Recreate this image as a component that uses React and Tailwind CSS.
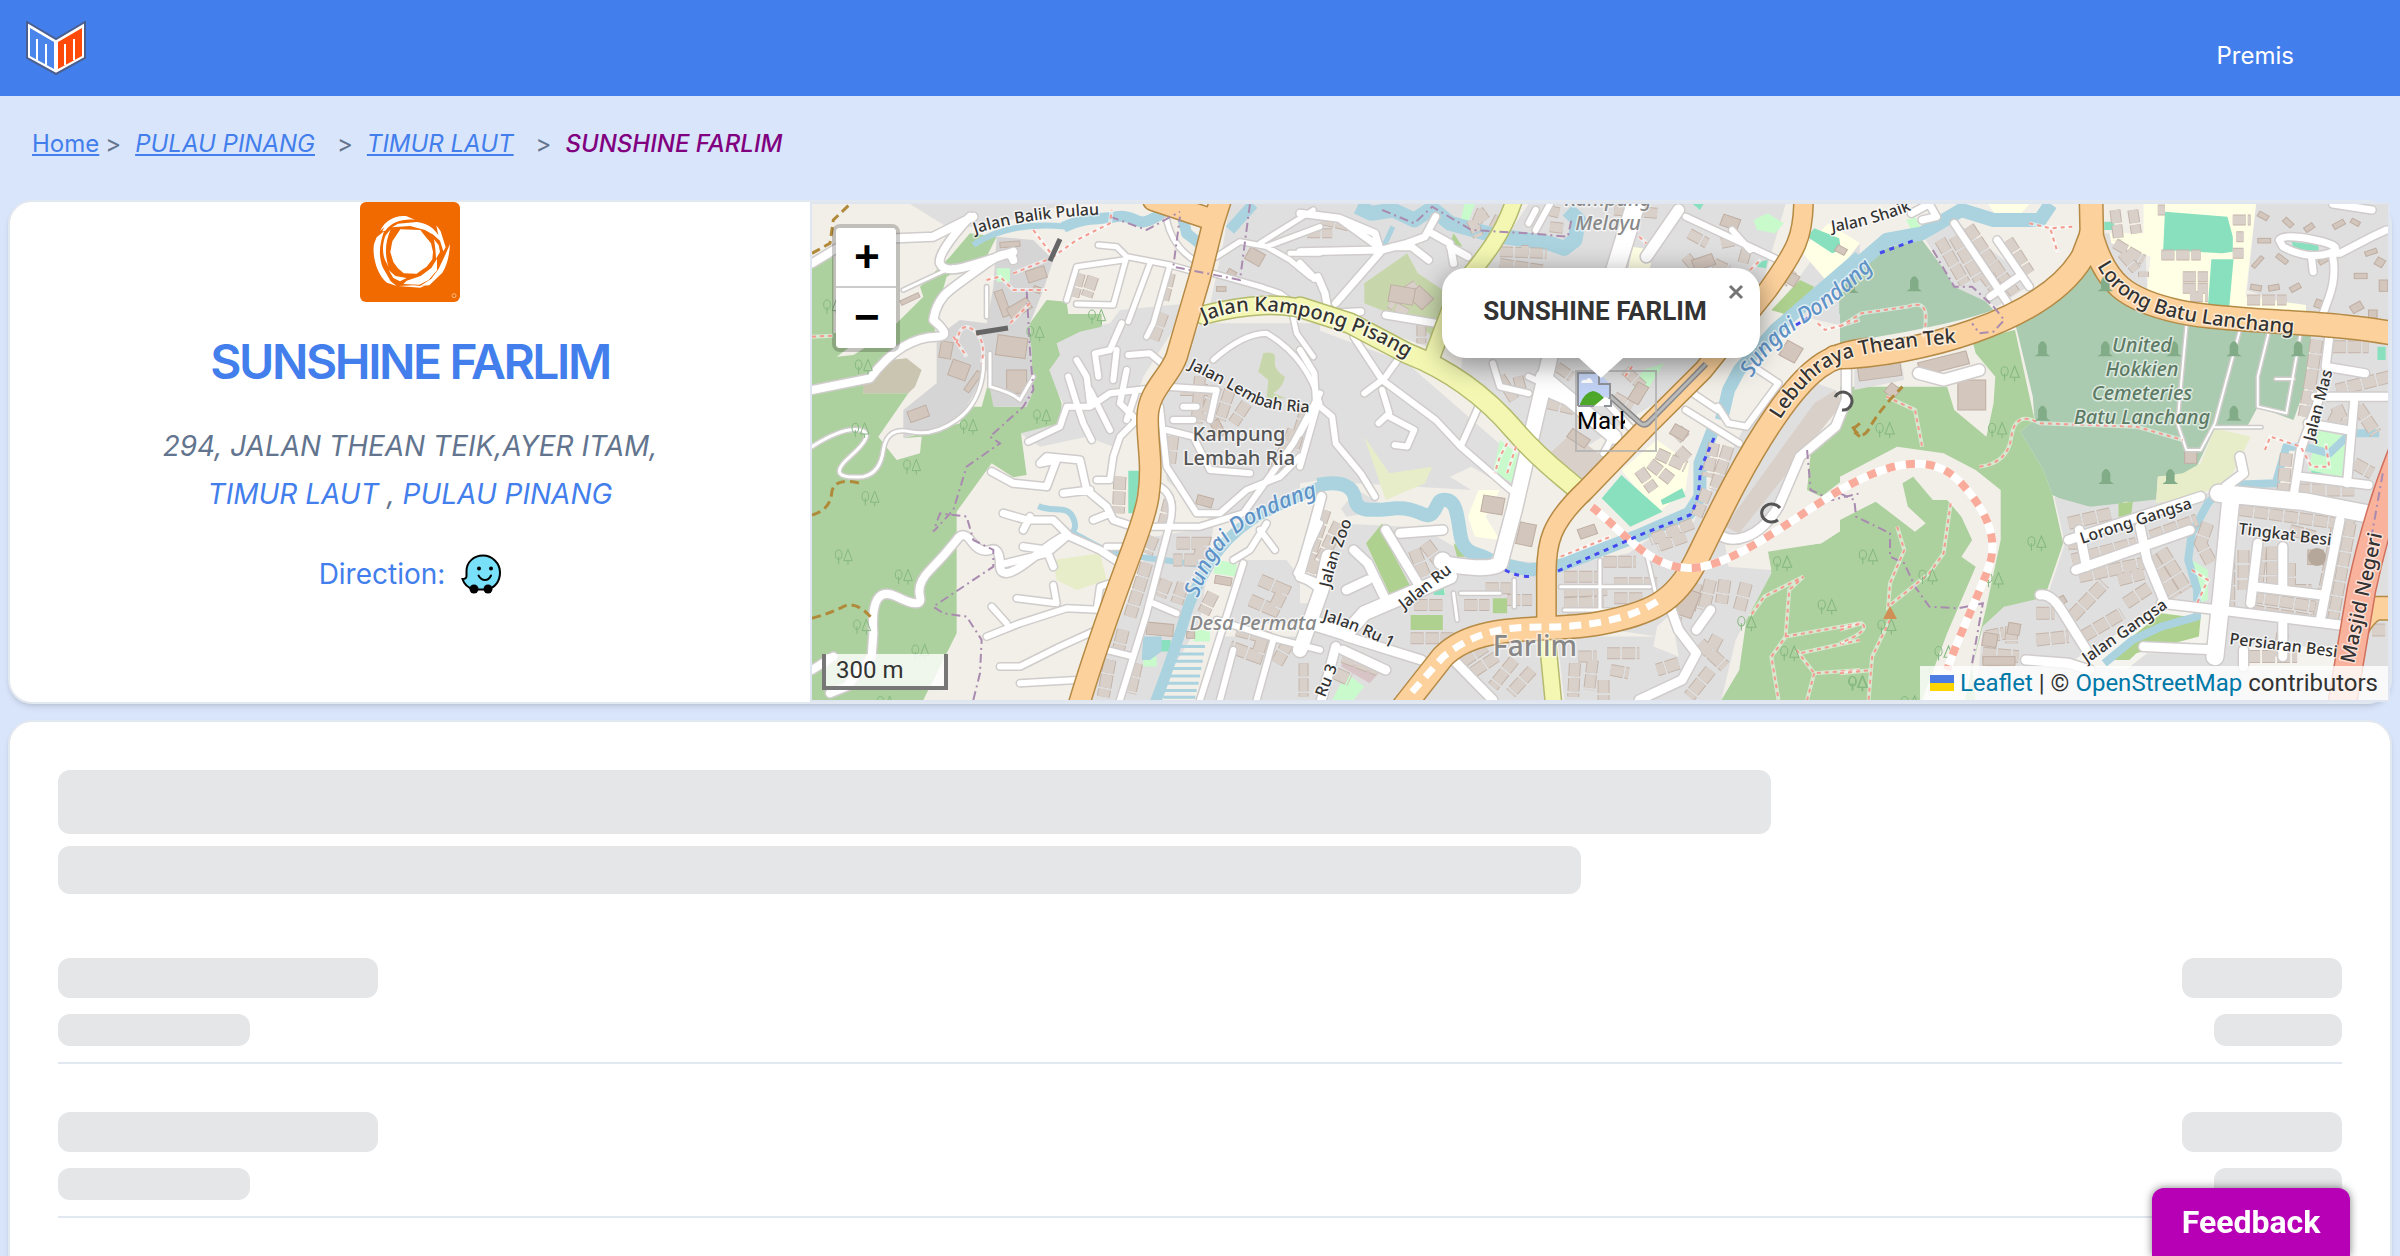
import { useId } from 'react';

// Map tiles. Shapes are kept in each tile's own units, the transform puts them on the map.
const tiles = [
    {
        id: 'west',
        transform: 'translate(800 190) scale(0.3333)',
        areas: [
            ['#e0dfdf', 'M330 42H800L560 110H440ZM1290 42H1560V345H1230L1270 160ZM1200 400H1560V900L1240 1000 1100 870 1080 640ZM770 460L830 420 930 400 960 360 1170 340 1030 560 960 760 940 770 860 740 720 770 660 730 780 700 790 640 745 560ZM1060 1040L1240 1010 1200 1300 1060 1530H860ZM1250 1340H1560V1530H1200ZM1340 1110H1460L1560 1240V1300H1270Z'],
            ['#add19e', 'M36 500L200 560 190 610H325L235 740 290 810 360 790 365 740 310 745 480 700 510 650H545L570 560 585 650H680L700 600 690 400 740 330 800 335 805 372H905V410L840 425 770 460 780 495 748 540 785 640 780 700 663 730 680 855 640 862 575 820 470 965V1330L370 1530H36ZM510 130L590 140 560 200 440 260 400 400 410 440 300 480 210 560 36 600V440L290 400 370 320 360 290 450 200ZM36 210L100 190V480L36 600Z'],
            ['#f2efe9', 'M110 500L150 470 200 470 160 495Z'],
            ['#c9c5b0', 'M190 575L270 510 320 505 365 540 345 590 325 610H190Z'],
            ['#d6d5d5', 'M590 140L700 150 760 210 730 300 690 400 700 600 680 650H580L560 540 500 650 480 690 310 745V660L410 580V440L480 390 560 400 580 290Z'],
            ['#c8d7ab', 'M1390 490Q1430 480 1425 510T1455 560Q1450 590 1420 610L1460 625H1400L1405 570 1375 545Z'],
            ['#e7edc9', 'M760 1110L900 1090 920 1170 830 1200 770 1170Z'],
            ['#c8facc', 'M590 235H630V275H590ZM1250 1110L1310 1120 1310 1160 1240 1150ZM1180 1320H1230V1355H1180ZM1030 1400H1070V1430H1030Z'],
            ['#88e0be', 'M985 842H1022L1002 970H985ZM1080 1350H1112V1385H1080Z'],
            ['#aad3df', 'M1030 1340H1085V1385L1050 1410H1025Z'],
        ],
        rivers: [
            [11, 'M790 112C850 80 900 90 950 80S1010 110 1050 90 1100 60 1140 65M1145 70L1160 130 1205 165M1360 42L1290 120'],
            [6, 'M520 165C600 110 700 100 800 110M715 948C760 970 800 940 820 985S800 1020 830 1035 890 1070 940 1090L1200 1125'],
            [11, 'M1560 890C1400 960 1300 1000 1230 1120S1160 1270 1140 1330 1100 1450 1065 1540'],
            [3, 'M1130 1370H1215M1125 1392H1212M1115 1414H1208M1110 1436H1204M1105 1458H1200M1100 1480H1196M1095 1502H1190M1090 1522H1186'],
        ],
        terraces: [
            [11, 'M840 250L820 320M880 260L860 320M1110 250L1090 330M1090 370L1060 450M1140 600H1230M1200 560L1190 700M1250 590L1210 690M1290 600L1260 690M1340 640L1300 700M1120 740L1110 820M1480 720L1420 850M1520 650L1480 780'],
            [12, 'M960 860L955 970M1110 930L1090 1010M1060 1040L1040 1090M1040 1120L990 1280M970 1320L955 1380M930 1410L910 1520M1010 1420L990 1510M1130 1060H1210L1195 1110H1120M1100 1170L1080 1220M1150 1180L1130 1240M1240 1210L1210 1270M1380 1170L1450 1200 1420 1260 1350 1230M1310 1320L1390 1340 1370 1400 1290 1370M1470 1350L1430 1420M1540 1110L1520 1160'],
        ],
        buildings: [
            [600, 155, 60, 16, -4], [680, 235, 58, 36, -18], [595, 300, 26, 80, -20], [640, 320, 36, 70, 60], [590, 440, 90, 60, 8], [620, 540, 60, 70, 0], [450, 515, 55, 50, 20], [325, 655, 60, 34, -20], [420, 455, 36, 50, 10], [300, 320, 60, 14, -25], [510, 540, 18, 70, 35], [1340, 180, 50, 40, 30], [1250, 290, 28, 14, 0], [1245, 1160, 50, 24, 10], [1190, 920, 48, 28, 15], [1240, 690, 28, 50, -30], [1280, 240, 26, 26, 30], [700, 290, 22, 18, 20], [1040, 1300, 80, 36, 5], [1160, 1325, 24, 20, 0],
        ],
        streets: [
            [8, 'M290 145L400 140 520 80M510 80Q410 190 420 220T500 230 640 185M36 220L110 175M36 600L210 565Q260 500 310 470T410 440 400 390Q410 330 450 300T560 220 640 210'],
            [8, 'M470 1050Q430 1100 390 1140T360 1220 290 1220 220 1330L215 1400 140 1490 90 1510M36 1440L100 1400M470 1050Q490 1020 515 1055T570 1080 600 1125 690 1110 790 1040'],
            [5, 'M895 165L950 170 980 200 1110 225 1200 250M1110 225L1060 400 1040 440M1050 220L985 395M980 200L940 345 830 342M800 330L830 230 970 210M1100 90Q1120 180 1200 220M1250 200L1320 155 1400 170 1560 110M1380 160L1540 60M1470 190H1560M1400 170L1470 210 1530 260M1240 250L1380 290 1440 310 1480 340M1560 640Q1520 500 1400 430 1330 430 1240 510M1470 340L1490 430 1540 500'],
            [6, 'M685 755L780 710 800 650 870 650 930 610 1060 595M830 510L860 560 870 640M805 560L830 640 850 700 875 750M870 600L930 720M965 400L930 480 885 490 895 560M950 480L940 570M985 495L1050 490 1110 540M980 540L960 640 1010 690 960 740 940 800 930 870 890 870M1010 600L980 690'],
            [7, 'M575 845L640 880 740 890 770 810 720 820 740 800 840 810 860 900 920 950 940 990 1000 1010M870 900L790 910M930 970L880 990M610 970L680 990 760 990 810 1040 900 1080 960 1120M670 1020L690 980M760 1130L740 1080 670 1070M600 1125L740 1090 800 1040'],
            [6, 'M560 1340L660 1300 800 1255 910 1260M575 1250L620 1300M650 1225L770 1240 760 1185M890 1260L900 1190 930 1180M600 1430H660L780 1370 890 1320M660 1480L830 1470M920 1070H980'],
            [6, 'M1080 650L1100 830 1190 970 1260 970 1340 900 1440 860 1500 800M1100 590L1250 600 1230 690M1100 720L1180 740 1230 840 1350 850M1080 890Q1130 920 1110 1000L1040 1270 960 1530M1040 1010L1200 1010 1330 970 1480 760 1560 610M1380 1020L1425 1080M1300 1110L1350 1080 1400 1000M1330 1120L1200 1530M1060 1240L1130 1270M1250 1290L1440 1350 1560 1380M1560 1200L1490 1150 1560 1000M1300 1380L1260 1530M1420 1350L1370 1530M1150 650H1190M1120 690H1180M880 1370L1000 1400'],
            [3, 'M36 770Q130 710 180 720T150 800 190 860Q240 850 250 780T330 725 470 690 550 540V500M310 300L460 230M570 490V590Q640 610 660 630L700 560M560 290L560 380'],
        ],
        secondary: [[17, 'M1210 375C1330 345 1450 330 1560 372']],
        primary: [[20, 'M1060 30L1240 90M1262 30L1240 100 1200 260 1130 500C1110 560 1045 600 1043 680S1060 820 1045 920 940 1200 838 1540']],
        trunk: [],
        redPaths: 'M700 120L760 200 830 150 930 100 935 60M560 270L600 260 640 300 740 300M640 250L740 210M470 460Q480 390 520 420T545 520M460 440L500 500M690 340L630 400M36 440L100 437',
        brownPaths: 'M36 190L90 160 100 90 150 42M36 975Q90 960 95 910T180 880M36 1285Q90 1270 130 1250T220 1290',
        borders: 'M680 300L690 480 700 600 670 650 570 740 600 760 500 830 460 960 400 1025 420 970 500 980 520 1050 580 1080V1130L400 1250 430 1270 500 1280 545 1350 540 1450 520 1530M1350 42L1320 270 1120 230 1140 80M930 80L1040 120 1140 65',
        trees: [[95, 350], [190, 530], [180, 720], [505, 710], [725, 680], [335, 830], [210, 925], [130, 1100], [310, 1160], [185, 1310], [360, 1385], [890, 380], [705, 430], [255, 1540]],
        graves: [],
    },
    {
        id: 'middle',
        transform: 'translate(1300 190) scale(0.3571 0.3333)',
        areas: [
            ['#e0dfdf', 'M0 42H620L440 330 380 480 0 330ZM640 42H1360L1290 300 1140 540 700 840 450 540 480 300ZM0 400L300 520 600 800 590 900 480 830 420 860 480 900 0 870ZM0 1100L160 900 480 1100 690 1120V1290L400 1370 300 1530H0ZM700 1140L1100 1000 1250 700 1420 570 1500 600 1300 1000 1320 1150 1220 1350 1180 1530H740L720 1340H1000L690 1290ZM400 1390L690 1340 700 1530H320ZM1440 200L1568 160V420L1330 360Z'],
            ['#f2efe9', 'M0 880L60 870 130 980 240 960 380 960 440 1040 300 1010 100 1000 40 1240H0ZM640 860L760 920 690 1040 600 1100 540 1090 560 900ZM720 1040L900 960 1000 1030 920 1090 730 1130Z'],
            ['#c8d7ab', 'M180 280L300 190 330 250 400 300V350L370 440 330 400 250 370 180 340Z'],
            ['#e7edc9', 'M180 740L250 850 370 830 350 880 240 930Z'],
            ['#aed18f', 'M185 1060L230 1000 260 1090 310 1190 250 1210ZM310 1275H400V1320H310ZM540 1225H580V1270H540ZM430 1060L490 1100 440 1100ZM430 130L455 170 420 160ZM1400 270L1440 290 1380 380 1320 360Z'],
            ['#ffffe5', 'M500 900L560 900 520 980 560 1050 490 1040 470 980ZM1400 180L1480 100 1568 160 1480 280ZM900 840L1000 750 1090 820 1080 900 1000 970ZM930 170L990 180 980 235H920Z'],
            ['#c8facc', 'M560 750L620 800 600 880 540 850ZM960 540L1020 520 960 620 930 600ZM1270 90L1310 70 1355 100 1330 130 1280 120ZM460 42H490L470 100 450 90ZM130 1450L180 1490 150 1530H90ZM380 1190H405V1215H380ZM1560 1100H1568V1120Z'],
            ['#88e0be', 'M900 855L1015 965 925 1010 845 925ZM1010 930L1070 895 1080 920 1015 945ZM1420 140L1440 115 1510 145 1515 180 1490 190ZM1285 215L1310 210 1305 235 1280 230ZM370 1195L400 1180 405 1215H375ZM1100 42H1130L1120 60Z'],
            ['#c98f9a55', 'M120 1410L220 1450 195 1480 115 1430Z'],
            ['#add19e', 'M1568 640L1500 720 1430 790 1420 900 1460 920 1568 830ZM1568 985L1460 1060 1310 1080 1320 1150 1250 1290 1230 1440 1180 1530H1568Z'],
            ['#f2efe9', 'M1190 1060L1400 960 1568 850V985L1460 1060 1310 1085 1320 1140 1200 1130ZM1000 1310L1040 1270 1060 1400 990 1370Z'],
            ['#d9d0c9', 'M760 730L850 800 790 870 700 790ZM1440 640L1500 600 1520 640 1430 760 1230 1030 1190 1010Z'],
            ['#aacbaf', 'M1510 300L1568 280V410L1530 400 1510 370Z'],
        ],
        rivers: [
            [15, 'M160 50L200 70 260 60 320 90 370 55 420 100 540 135 700 160 740 175 770 150 780 90 750 60'],
            [5, 'M260 110L230 180 150 270'],
            [14, 'M50 885C120 870 150 890 155 930S210 960 270 955 350 990 370 970 380 925 410 930 440 980 450 1040 510 1090 530 1110'],
            [13, 'M560 1120L640 1140 720 1130 940 1040 1090 970 1120 920 1120 820 1160 710M1180 690L1200 600 1230 540 1330 420 1568 200'],
        ],
        terraces: [
            [10, 'M480 90L500 140M510 60L490 110M560 185L690 190M560 80L540 120M690 60L730 70M700 110L740 115M880 60L1000 70M560 220L680 240M560 560L600 630M610 560L620 600M720 530L760 560M700 600L780 640M690 640L770 660M910 540L960 590M880 620L930 650M1090 130L1140 160M1080 200L1120 250M1180 160L1230 150M1160 220L1200 240M1250 180L1240 220M1380 240L1350 280'],
            [11, 'M1000 790L1080 830M980 820L1040 870M950 840L990 900M1080 720L1050 750M1060 780L1090 810M1160 760L1140 860M1200 770L1160 900M1140 900L1110 980M1100 1000L980 1050M1080 1040L1000 1070'],
            [11, 'M520 1195H590M740 1160H840M850 1115H940M740 1205L860 1200M880 1180H1000M460 1245H530M580 1230H650M740 1240L850 1235M880 1225H960M310 1345H430M320 1245H400M750 1280H840M520 1370L450 1420M600 1410L540 1490M650 1440L590 1510M550 1400L480 1450M770 1420L765 1520M820 1410L810 1500M860 1390H950M870 1440L920 1450M850 1470V1530M780 1400H830'],
            [12, 'M1070 1190L1050 1290M1110 1180L1090 1260M1150 1170L1130 1260M1190 1170L1180 1240M1250 1180L1230 1260M1120 1360L1190 1430M1170 1340L1140 1400M1150 1440L1090 1520M1060 1420L1000 1440M70 960L20 1120M110 1000L60 1110M350 1060L400 1130M320 1080L350 1160M120 1400L220 1440M100 1450L140 1470M40 1110L20 1180'],
            [9, 'M60 90L140 110M20 130H90M260 330L330 280M300 370L250 340M340 400V460M500 60L520 90M10 1420V1520M620 180H640'],
        ],
        buildings: [
            [310, 300, 56, 46, 45], [510, 920, 60, 50, 10], [610, 1000, 46, 66, 12], [1040, 710, 44, 34, 30], [1340, 640, 30, 60, 35], [1350, 460, 50, 50, 30], [750, 730, 60, 30, 35], [250, 290, 70, 50, 10], [1360, 250, 34, 34, 30], [1100, 200, 60, 34, -20], [1180, 80, 50, 34, 20], [780, 1010, 50, 30, -20], [1060, 1200, 50, 80, 20], [1500, 170, 30, 20, 30], [930, 580, 34, 60, 30],
        ],
        streets: [
            [7, 'M0 70L110 85 210 130 225 180 0 185M110 85L220 170M100 340L230 180 300 160 360 210M300 160L350 140 380 80M370 130L420 160 430 220M420 170L470 200M0 220L40 265M50 260L70 310 80 370 170 365M240 375L380 400M260 170L310 170'],
            [6, 'M0 480L40 550 45 640 0 730M45 640L90 680 100 760 170 850 210 920M50 640L0 830M150 440L230 570 380 690 450 770 590 900M230 570L180 610M230 600L250 670 220 700M250 680L320 720 300 770 265 765M500 650L450 770M280 500L240 560'],
            [15, 'M700 500L650 730 600 960 560 1120Q540 1140 460 1130T400 1110'],
            [14, 'M400 1110L420 1160 180 1270 130 1330 40 1300M80 1100L60 1200 0 1380M680 560L880 740'],
            [6, 'M540 520L560 590 640 610M640 560L700 590M690 610L800 660M880 730L850 790M800 600L860 640 940 730M1080 660L1230 760M1100 610L1170 660M1170 650L1200 700 1250 710 1340 580 1270 530M1080 80L1340 210M1210 120L1260 180M660 60L640 100M700 42L660 120'],
            [9, 'M60 920L40 1000 0 1150M150 1080L190 1120 240 1230M240 1020L330 1180M280 1030L400 1020M0 1160L70 1190M130 1200L190 1170M130 1340L340 1410M100 1370L60 1530M120 1380L240 1440M430 1410L540 1530'],
            [18, 'M940 42L880 250'],
            [11, 'M1060 60L970 200'],
            [9, 'M1040 1260L1060 1320 1110 1390 1070 1470 950 1530M1110 1320L1150 1260M1170 1030Q1200 1060 1250 1040T1340 950L1400 800 1500 710 1530 630 1530 540'],
            [3, 'M840 1110V1270M970 1090L1000 1230M600 1170V1250M430 1210L440 1290M450 1210H560M730 1190H980M740 1260H900'],
        ],
        secondary: [
            [15, 'M600 30C570 130 520 200 440 300L370 500'],
            [19, 'M0 352L140 400 300 490C420 540 520 620 600 720S740 860 790 910'],
            [15, 'M690 1320L710 1540'],
        ],
        primary: [
            [18, 'M1410 30C1410 140 1390 180 1310 300L1130 540 980 700 800 900C700 1000 690 1060 690 1150V1300'],
            [22, 'M1590 480C1480 490 1420 540 1330 680S1170 980 1110 1110 980 1270 840 1300 500 1290 400 1400L290 1550'],
        ],
        trunk: [],
        redPaths: 'M580 760L560 800 545 850M605 770L580 850M730 1100L870 1040M950 140L970 160M1260 240L1290 210M1568 1300L1360 1340 1320 1400 1340 1530M1360 1340L1370 1200 1410 1160 1300 1220 1260 1280M1390 1380L1440 1450 1568 1440M1440 1450L1420 1530M1568 1350L1400 1390M1450 400L1470 420 1568 390M930 530L910 560',
        brownPaths: 'M1568 700L1545 720 1568 740',
        borders: 'M230 60L320 100 370 50 480 120 640 130 750 140 760 90M1420 780L1430 900 1490 930 1568 910',
        trees: [[1350, 1120], [1475, 1250], [1370, 1390], [1250, 1300], [1560, 1480]],
        graves: [],
    },
    {
        id: 'east',
        transform: 'translate(1840 190) scale(0.3571 0.3333)',
        areas: [
            ['#add19e', 'M370 450L490 420 545 690 505 725 570 840 595 915 625 1060 580 1200 520 1270 460 1250 400 1310 370 1430 380 1530H0V590L180 590H300L320 660 410 740 430 640 435 560 380 490Z'],
            ['#aacbaf', 'M705 190C740 290 860 370 960 400L1320 430 1300 600 1270 690 1170 650 1140 710 1050 715 990 850 890 860 885 940 800 935 740 955 650 945 595 915 570 840 505 725 545 690 540 620 500 440 490 400Q640 320 705 190ZM0 300L100 180 230 150 320 280 380 300 430 360C300 410 100 440 0 460Z'],
            ['#f2efe9', 'M0 860L160 770 290 790 380 840 450 900V1050L410 1250 370 1430 350 1530H230L300 1330 380 1130 340 1100 370 1050 340 980 300 930 260 930 205 860 175 880 190 950 240 1000 210 1025 100 935 0 990Z'],
            ['#e0dfdf', 'M720 42H850L860 300 760 230ZM1165 42H1568V400L1350 380 1140 300ZM600 920L700 950 1000 915 1080 900 1290 880 1320 430 1568 450V1530H380L400 1310 460 1250 580 1220 630 1060ZM240 150L320 90 540 280 440 350 320 290ZM40 540L170 500 180 570 40 600Z'],
            ['#e7edc9', 'M1050 715L1150 740 1100 850 1060 890 1000 915 885 940 890 860 960 850 1010 820Z'],
            ['#ffffe5', 'M740 42H1165L1135 320 1305 345V375L960 345 860 300 870 200 760 160ZM415 42H530L500 80H440ZM0 130L20 200 0 250Z'],
            ['#f2efe9', 'M720 42H850V130H740Z'],
            ['#f5f3ee', 'M900 1250L1080 1270V1390L860 1390 800 1440 640 1420ZM1140 1370H1400V1440H1140Z'],
            ['#88e0be', 'M910 65L1085 80 1100 140V185L1070 190 905 180ZM1040 208H1102L1090 352H1030ZM740 95H768V120H740ZM1265 155L1340 165V185L1270 175ZM1505 470H1528V510H1505ZM1320 825H1365V850H1320Z'],
            ['#c8facc', 'M185 90L210 80 230 120 200 120ZM1340 720L1420 740 1405 860 1310 840ZM985 1110L1030 1140V1230L1000 1240Z'],
            ['#aed18f', 'M780 940L820 935 815 980H780ZM1010 1285L1005 1340 830 1390 810 1410H740L830 1330 900 1270Z'],
        ],
        rivers: [
            [14, 'M0 270L130 150 230 130 340 60 430 90 560 90 590 42'],
            [8, 'M1510 730H1430L1370 790 1300 770H1250L1220 880 1080 885 1030 940 985 1030 975 1110 1000 1200 1000 1280 900 1310 820 1350 740 1420'],
        ],
        terraces: [
            [11, 'M280 150L350 280M320 140L390 270M360 110L440 240M430 220L490 310M400 250L450 320M470 150L530 250'],
            [10, 'M770 60L780 150M820 60L830 130M770 160L850 210M890 60H910M790 190L830 240M850 245V260M1100 90H1150M1110 140H1130M960 260H1030M960 295H1030M980 320H1030M1140 330H1250M1100 190H1130M900 195H1010'],
            [12, 'M1335 450L1320 560M1320 560L1300 680M1380 470H1480M1540 560L1390 600M1390 650L1420 720M1450 650L1500 730M1250 790L1240 910M1280 900H1440M1440 820L1490 850M1380 700L1400 660'],
            [12, 'M640 1000L760 970M650 1110L830 1060M870 1040L1000 990M670 1160L850 1120M870 1100L940 1220M900 1080L970 1200M780 1170L850 1150M1030 1000L1010 1060 1040 1120M640 1060H690M680 1340L790 1270M800 1240L870 1190M650 1280L740 1180'],
            [11, 'M1120 960L1390 1000M1090 1100V1250M1130 1080V1200M1180 1070L1170 1180M1210 1070V1180M1260 1120V1200H1320M1150 1220L1330 1250M1150 1260L1320 1290M1390 1020L1340 1280M1430 1000L1380 1290M1260 1020L1330 1040M1420 1000L1450 960'],
            [12, 'M410 1340L460 1330M480 1310V1360M400 1390L500 1400M430 1410V1430M550 1270H600M550 1350L640 1340M1240 1330L1230 1400M1140 1400H1280M1490 1320H1530'],
        ],
        buildings: [
            [330, 570, 78, 90, 0], [220, 500, 140, 40, -15], [50, 510, 120, 55, -8], [965, 780, 34, 40, 0], [1170, 70, 30, 16, 30], [1240, 90, 30, 16, 45], [1300, 105, 28, 16, -35], [1170, 145, 36, 14, 0], [1150, 210, 40, 12, -50], [1220, 200, 36, 14, 40], [1380, 95, 34, 16, -30], [1430, 90, 26, 14, 30], [1470, 180, 34, 14, -20], [1440, 250, 36, 16, 0], [1500, 205, 24, 24, 30], [1340, 205, 30, 14, -30], [1260, 285, 30, 16, -30], [1200, 285, 30, 16, -10], [1430, 340, 34, 24, -30], [1510, 270, 24, 34, 0], [1330, 330, 24, 24, 20], [1480, 360, 24, 24, 0], [1310, 1080, 44, 44, 0], [400, 1330, 40, 40, 10], [470, 1300, 34, 34, 10], [1150, 285, 30, 16, 10], [400, 1400, 90, 26, 0], [130, 585, 34, 34, 40], [610, 1220, 22, 22, -30],
        ],
        streets: [
            [7, 'M320 100L470 340M440 150L530 290M500 260L420 320M200 70L250 42 270 80 230 90'],
            [7, 'M1230 150Q1240 130 1330 150T1370 190Q1310 210 1240 170ZM1370 190L1400 190 1490 140 1530 120M1320 200L1325 245M1380 200Q1390 260 1370 320L1350 380M1380 42L1490 60'],
            [8, 'M1370 440L1360 530 1470 550M1330 620H1530M1440 630L1420 880M1310 700L1420 720M1350 600L1290 780 1270 920M1290 860L1480 885'],
            [17, 'M1060 910L1300 935 1470 970M1095 920L1070 1200 1050 1400'],
            [9, 'M1080 890L1130 850 1120 800M640 1050L1010 920M660 1140L980 1020M840 1010L860 1110 910 1240M670 1020L690 1130M900 1240L1100 1265 1400 1305M1060 1380L850 1370M560 1215Q590 1210 620 1260L690 1380M520 1410L640 1420 700 1440M1170 1060L1150 1240M1400 990L1345 1290M1240 1070V1190M1160 1190L1350 1215M1240 1290V1400M1130 1380V1430'],
            [11, 'M220 550L290 570 390 540'],
            [2, 'M970 410L945 700 970 780H1010L1050 700 1120 420M1200 430L1170 560V650L1250 670 1290 430M1220 567H1270M1050 712L1180 712'],
        ],
        secondary: [],
        primary: [[22, 'M-15 502C100 500 250 470 370 425S620 310 680 200L705 130 703 30M703 130C740 280 800 330 950 365S1400 390 1590 440M1568 1255H1500Q1440 1290 1430 1400']],
        trunk: [[27, 'M1590 750C1530 900 1490 1050 1460 1200L1405 1550']],
        redPaths: 'M0 410L60 370 190 350Q240 330 240 380T230 440M530 100L590 115 650 110M590 120L610 190M130 620L210 660 230 770M390 830Q470 820 480 740T560 700L830 710 960 750M160 1010L180 1080 140 1180 135 1250 250 1150 290 1090 310 940M140 1290L90 1400 80 1530M0 1320L60 1300Q90 1320 0 1360M0 1450L90 1440M1190 780L1205 740 1290 770 1320 830 1370 830 1360 760M985 1140L1030 1170 1000 1240',
        brownPaths: 'M35 710Q60 760 85 710T175 590',
        borders: 'M0 910L40 930 45 980 140 1030V1100L180 1120 210 1190 250 1250 330 1255 400 1240 370 1420M430 350L460 390 430 425 390 430 370 400M260 180L320 290H370L430 350M1520 850L1490 1030',
        trees: [[475, 550], [125, 720], [440, 720], [550, 1060], [78, 1100], [245, 1160], [130, 1310], [50, 1480], [290, 1390], [430, 1170], [195, 1540]],
        graves: [[208, 280], [567, 475], [743, 280], [743, 475], [1103, 475], [1283, 475], [567, 668], [1103, 668], [745, 858], [925, 858], [30, 285], [935, 475]],
    },
];

const streetLabels = [
    { text: 'Jalan Balik Pulau', d: 'M975 234Q1030 216 1120 214', size: 16 },
    { text: 'Jalan Kampong Pisang', d: 'M1204 322Q1250 301 1318 320T1430 374', size: 20 },
    { text: 'Jalan Lembah Ria', d: 'M1188 368Q1225 386 1248 400T1330 412', size: 16 },
    { text: 'Sungai Dondang', d: 'M1198 598Q1215 545 1250 525T1360 482', size: 22, fill: '#5f93c8', italic: true },
    { text: 'Sungai Dondang', d: 'M1752 378Q1770 345 1810 320T1900 240', size: 22, fill: '#5f93c8', italic: true },
    { text: 'Jalan Zoo', d: 'M1330 588Q1340 545 1362 500', size: 16 },
    { text: 'Jalan Ru', d: 'M1404 610L1474 555', size: 16 },
    { text: 'Jalan Ru 1', d: 'M1322 620Q1365 632 1420 664', size: 16 },
    { text: 'Ru 3', d: 'M1325 698L1344 650', size: 16 },
    { text: 'Lebuhraya Thean Tek', d: 'M1780 420Q1808 375 1838 362T1970 342', size: 20 },
    { text: 'Jalan Shaik', d: 'M1832 232Q1880 225 1930 202', size: 16 },
    { text: 'Lorong Batu Lanchang', d: 'M2097 266Q2115 300 2160 314T2330 336', size: 20 },
    { text: 'Jalan Mas', d: 'M2314 442L2338 350', size: 16 },
    { text: 'Lorong Gangsa', d: 'M2082 544L2220 499', size: 16 },
    { text: 'Jalan Gangsa', d: 'M2087 664L2190 592', size: 16 },
    { text: 'Tingkat Besi', d: 'M2238 534L2350 548', size: 16 },
    { text: 'Persiaran Besi', d: 'M2229 644L2360 660', size: 16 },
    { text: 'Masjid Negeri', d: 'M2354 664L2386 516', size: 20 },
];

const placeLabels = [
    { lines: ['Kampung', 'Lembah Ria'], x: 1239, y: 441, size: 20, fill: '#555' },
    { lines: ['Kampung', 'Melayu'], x: 1608, y: 206, size: 20, fill: '#888', italic: true },
    { lines: ['Desa Permata'], x: 1253, y: 630, size: 20, fill: '#888', italic: true },
    { lines: ['Farlim'], x: 1535, y: 656, size: 28, fill: '#888' },
    { lines: ['United', 'Hokkien', 'Cemeteries', 'Batu Lanchang'], x: 2142, y: 352, size: 20, fill: '#5d7a66', italic: true },
];

function Lines({ items, color, extra = 0, ...rest }) {
    return items.map(([width, d]) => (
        <path key={d} d={d} stroke={color} strokeWidth={width + extra} vectorEffect="non-scaling-stroke" {...rest} />
    ));
}

function Roads({ kind, color, casing }) {
    return (
        <g fill="none" strokeLinejoin="round" strokeLinecap="round">
            {tiles.map((t) => (
                <g key={t.id} transform={t.transform}><Lines items={t[kind]} color={casing} extra={3} /></g>
            ))}
            {tiles.map((t) => (
                <g key={t.id} transform={t.transform}><Lines items={t[kind]} color={color} /></g>
            ))}
        </g>
    );
}

function StreetLabel({ text, d, size, fill = '#333', italic }) {
    const id = useId();
    return (
        <>
            <path id={id} d={d} fill="none" stroke="none" />
            <text fontSize={size} fill={fill} fontStyle={italic ? 'italic' : 'normal'}>
                <textPath href={`#${id}`}>{text}</textPath>
            </text>
        </>
    );
}

function MapCanvas() {
    return (
        <svg className="absolute inset-0 h-full w-full" viewBox="812 204 1576 496" preserveAspectRatio="xMidYMid slice" aria-hidden="true">
            <rect x="700" y="100" width="1800" height="700" fill="#f2efe9" />
            {tiles.map((t) => (
                <g key={t.id} transform={t.transform}>
                    {t.areas.map(([fill, d]) => <path key={d} d={d} fill={fill} />)}
                </g>
            ))}
            {tiles.map((t) => (
                <g key={t.id} transform={t.transform} fill="none">
                    <Lines items={t.rivers} color="#aad3df" strokeLinejoin="round" />
                    <Lines items={t.terraces} color="#c3b5ab" strokeDasharray="13 2" extra={1} />
                    <Lines items={t.terraces} color="#d9d0c9" strokeDasharray="13 2" extra={-1} />
                    {t.buildings.map(([x, y, w, h, r]) => (
                        <rect key={`${x}-${y}`} x={x} y={y} width={w} height={h} transform={`rotate(${r} ${x + w / 2} ${y + h / 2})`} fill="#d3c6bd" stroke="#bfafa4" strokeWidth="3" />
                    ))}
                </g>
            ))}
            <Roads kind="streets" color="#fff" casing="#cfcccb" />
            <Roads kind="secondary" color="#f3f7b2" casing="#b4bb6e" />
            <Roads kind="primary" color="#fcd19c" casing="#b58a45" />
            <Roads kind="trunk" color="#f9b29c" casing="#d0705c" />

            {tiles.map((t) => (
                <g key={t.id} transform={t.transform} fill="none">
                    <path d={t.borders} stroke="#a98bb0" strokeWidth="2" strokeDasharray="9 4 2 4" vectorEffect="non-scaling-stroke" />
                    <path d={t.redPaths} stroke="#fff" strokeWidth="4" strokeOpacity=".5" vectorEffect="non-scaling-stroke" />
                    <path d={t.redPaths} stroke="#f49a8e" strokeWidth="2" strokeDasharray="4 4" vectorEffect="non-scaling-stroke" />
                    <path d={t.brownPaths} stroke="#b08a3a" strokeWidth="3" strokeDasharray="9 5" vectorEffect="non-scaling-stroke" />
                    <g stroke="#86b881" strokeWidth="3">
                        {t.trees.map(([x, y]) => (
                            <path key={`${x}-${y}`} d={`M${x - 14} ${y + 22}V${y}m-10 -6a10 14 0 1 1 20 0a10 14 0 1 1 -20 0M${x + 14} ${y + 24}V${y + 12}m-13 0l13 -34 13 34z`} />
                        ))}
                    </g>
                    <g fill="#82ab88">
                        {t.graves.map(([x, y]) => (
                            <path key={`${x}-${y}`} d={`M${x - 22} ${y + 24}l10 -8v-24q12 -26 24 0v24l10 8z`} />
                        ))}
                    </g>
                </g>
            ))}

            {/* Railway under construction, tunnel and canal path */}
            <g fill="none">
                <path d="M1592 507C1622 530 1650 570 1692 568S1790 520 1840 490C1893 460 1933 453 1961 483S1997 540 1990 563 1961 630 1947 670" stroke="#fff" strokeWidth="8" />
                <path d="M1592 507C1622 530 1650 570 1692 568S1790 520 1840 490C1893 460 1933 453 1961 483S1997 540 1990 563 1961 630 1947 670" stroke="#f9ac9c" strokeWidth="8" strokeDasharray="9 11" />
                <path d="M1412 692L1443 657C1480 627 1514 627 1546 627S1630 622 1662 598" stroke="#fff" strokeWidth="7" strokeDasharray="12 8" />
                <path d="M1505 570Q1520 578 1534 576M1558 571L1640 535 1690 515Q1700 500 1700 470L1714 438M1796 325L1808 318M1880 253L1915 240" stroke="#4449f0" strokeWidth="3" strokeDasharray="5 5" />
                <path d="M1610 396L1640 423Q1645 427 1650 421L1706 364" stroke="#8a8a8a" strokeWidth="6" />
                <path d="M1610 396L1640 423Q1645 427 1650 421L1706 364" stroke="#bbb" strokeWidth="3" />
                <path d="M1050 261L1060 239M976 333L1008 328" stroke="#666" strokeWidth="5" />
                <path d="M1780 508A10 9 0 1 0 1778 520M1835 397A9 9 0 1 1 1842 410" stroke="#555" strokeWidth="3" />
            </g>
            <path d="M1883 619l7-13 7 13z" fill="#d08f55" />
            <ellipse cx="2317" cy="557" rx="9" ry="9" fill="#b5a89a" />

            <g fontFamily="Noto Sans, sans-serif" fontWeight="500" stroke="#fff" strokeOpacity=".6" strokeWidth="3" paintOrder="stroke" strokeLinejoin="round">
                {streetLabels.map((label) => <StreetLabel key={label.d} {...label} />)}
                {placeLabels.map(({ lines, x, y, size, fill, italic }) =>
                    lines.map((line, i) => (
                        <text key={line + y} x={x} y={y + i * 24} fontSize={size} fill={fill} fontStyle={italic ? 'italic' : 'normal'} textAnchor="middle">{line}</text>
                    ))
                )}
            </g>
        </svg>
    );
}

function Logo() {
    return (
        <svg className="h-[54px] w-[62px]" viewBox="0 0 62 54" fill="none" aria-hidden="true">
            <path d="M2 1L31 18 60 1V37L31 53 2 37Z" fill="#fff" stroke="#4b5f8f" strokeWidth="2" />
            <path d="M5 7L29 21V48L5 35Z" fill="#4a85ec" />
            <path d="M33 21L57 7V35L33 48Z" fill="#ff4a0a" />
            <path d="M12 39V18M21 44V23M40 44V23M49 39V18" stroke="#fff" strokeWidth="2" />
        </svg>
    );
}

function SunshineLogo() {
    return (
        <svg className="size-[100px] rounded-md" viewBox="0 0 300 300" role="img" aria-label="Sunshine">
            <rect width="300" height="300" fill="#f06a00" />
            <g fill="#fff">
                <path d="M121 82L181 84 192 98 213 124 219 150 217 172 200 194 182 206 170 215 131 214 113 198 100 180 91 150 97 118Z" />
                <path d="M60 87C75 55 105 39 138 42L165 53C125 50 95 60 76 86L67 88 73 76Z" />
                <path d="M50 106L72 88C58 130 55 160 68 196L92 238 110 252 81 242C50 218 36 160 42 126Z" />
                <path d="M77 100L92 82C76 120 73 155 86 196L74 172C66 148 68 120 77 100Z" />
                <path d="M96 76L114 65 170 60C195 62 218 76 230 92L235 100 229 70 242 88 257 136 250 148 240 116 220 98 195 84 150 72Z" />
                <path d="M86 204L106 222 140 228 120 238 100 228Z" />
                <path d="M140 236L182 222 214 198 231 170V205L206 234 178 248 130 246Z" />
                <path d="M236 200L256 158 270 126C268 155 264 185 247 212L208 250 180 252 214 230Z" />
                <path d="M222 112L236 130 240 150 228 170 226 140Z" />
                <path d="M115 252L160 250 192 253 180 257Z" />
            </g>
            <circle cx="282" cy="281" r="6" fill="none" stroke="#f9b582" strokeWidth="3" />
        </svg>
    );
}

function WazeIcon() {
    return (
        <svg className="size-10" viewBox="0 0 40 40" aria-hidden="true">
            <path d="M22 1.500C13 1.500 5.500 8 5.500 17V22C5.500 24 4 25 1.500 25 3 30 7 34 13 35.500H26C34 34 39 27 39 18.500 39 9 31 1.500 22 1.500Z" fill="#78e0f8" stroke="#000" strokeWidth="2" />
            <circle cx="13" cy="35" r="4.500" />
            <circle cx="27" cy="35" r="4.500" />
            <circle cx="18" cy="14.500" r="2" />
            <circle cx="30" cy="14.500" r="2" />
            <path d="M17.500 21.500Q20 26 24 26T30 21.500" fill="none" stroke="#000" strokeWidth="2" strokeLinecap="round" />
        </svg>
    );
}

function BrokenImage() {
    return (
        <svg className="h-[35px] w-[35px]" viewBox="0 0 35 35" aria-hidden="true">
            <path d="M1 34V1H22L33 12V26L27 24 18 34Z" fill="#c3d3f5" />
            <path d="M4 11Q5 7 9 8 13 3 16 11Z" fill="#fff" />
            <path d="M3 32Q8 20 16 19 22 20 27 26L18 34H3Z" fill="#4da829" />
            <path d="M17 34L28 25 34 28V34Z" fill="#fff" />
            <path d="M1 34V1H22M22 4V12H33V26M1 34H17M27 34H34V28" fill="none" stroke="#8f9399" strokeWidth="2" />
        </svg>
    );
}

function StoreMap() {
    return (
        <div className="relative flex-1 overflow-hidden border-2 border-[#dfe6f2] font-[Roboto,sans-serif] text-2xl text-[#333]">
            <MapCanvas />

            <div className="absolute left-5 top-5 flex flex-col rounded-lg border-4 border-black/20 bg-clip-padding font-['Liberation_Mono',monospace] text-[44px] font-bold leading-none text-black">
                <button type="button" aria-label="Zoom in" className="h-[60px] w-[60px] rounded-t border-b-2 border-[#ccc] bg-white pl-0.5 pt-1.5">+</button>
                <button type="button" aria-label="Zoom out" className="h-[60px] w-[60px] rounded-b bg-white pl-0.5 pt-1">−</button>
            </div>

            {/* Marker */}
            <div className="absolute left-[763px] top-[166px] size-[82px] border-2 border-[#b0b0b0]/80 text-2xl text-black">
                <BrokenImage />
                <div className="w-12 overflow-hidden leading-7">Mark</div>
            </div>

            {/* Popup */}
            <div className="absolute left-[630px] top-16 flex h-[90px] w-[318px] items-center justify-center rounded-3xl bg-white pb-1 pr-3 text-[26px] font-bold shadow-[0_6px_28px_rgba(0,0,0,0.4)]">
                SUNSHINE FARLIM
                <button type="button" aria-label="Close popup" className="absolute right-4 top-4">
                    <svg className="size-4" viewBox="0 0 16 16" aria-hidden="true">
                        <path d="M2 2L14 14M14 2L2 14" stroke="#757575" strokeWidth="3" />
                    </svg>
                </button>
                <svg className="absolute left-1/2 top-full h-5 w-11 -translate-x-1/2" viewBox="0 0 44 20" aria-hidden="true">
                    <path d="M0 0H44L22 20Z" fill="#fff" />
                </svg>
            </div>

            <div className="absolute bottom-2.5 left-2.5 flex h-9 w-[126px] items-center border-4 border-t-0 border-[#777] bg-white/80 px-2.5">300 m</div>

            <div className="absolute bottom-0 right-0 flex h-[34px] items-center whitespace-pre bg-white/80 px-2.5">
                <svg className="mr-1.5 h-4 w-6" viewBox="0 0 24 16" aria-hidden="true">
                    <path fill="#4c7be1" d="M0 0h24v8H0z" />
                    <path fill="#ffd500" d="M0 8h24v8H0z" />
                </svg>
                <a href="#leaflet" className="text-[#0078a8]">Leaflet</a>
                <span> | © </span>
                <a href="#osm" className="text-[#0078a8]">OpenStreetMap</a>
                <span> contributors</span>
            </div>
        </div>
    );
}

function SkeletonRow() {
    return (
        <div className="mb-12 flex justify-between border-b-2 border-slate-200 pb-4">
            <div className="flex flex-col gap-4">
                <div className="h-10 w-80 rounded-xl bg-[#e5e6e8]" />
                <div className="h-8 w-48 rounded-xl bg-[#e5e6e8]" />
            </div>
            <div className="flex flex-col items-end gap-4">
                <div className="h-10 w-40 rounded-xl bg-[#e5e6e8]" />
                <div className="h-8 w-32 rounded-xl bg-[#e5e6e8]" />
            </div>
        </div>
    );
}

export default function App() {
    return (
        <div className="h-screen overflow-hidden bg-[#d9e5fb] font-[Inter,sans-serif] text-2xl text-slate-500">
            <header className="flex h-24 items-center justify-between bg-[#427eec] pl-[25px] pr-[106px]">
                <a href="#home" aria-label="Home"><Logo /></a>
                <a href="#premis" className="pt-4 text-white">Premis</a>
            </header>

            <nav aria-label="Breadcrumb" className="flex h-[94px] items-center px-8 pt-0.5">
                <a href="#home" className="text-[#427eec] underline">Home</a>
                <span className="ml-1.5 mr-3.5">&gt;</span>
                <a href="#pulau-pinang" className="italic text-[#427eec] underline">PULAU PINANG</a>
                <span className="ml-[22px] mr-3.5">&gt;</span>
                <a href="#timur-laut" className="italic text-[#427eec] underline">TIMUR LAUT</a>
                <span className="ml-[22px] mr-3.5">&gt;</span>
                <span className="font-medium italic text-[#800080]">SUNSHINE FARLIM</span>
            </nav>

            <main className="px-2 pt-2.5">
                <section className="flex h-[504px] rounded-3xl border-2 border-slate-200 bg-white shadow-md">
                    <div className="flex w-[calc(100vw/3)] flex-col items-center">
                        <SunshineLogo />
                        <h1 className="mt-7 text-5xl font-semibold leading-[64px] tracking-tighter text-[#427eec]">SUNSHINE FARLIM</h1>
                        <address className="mt-7 text-center text-[28px] leading-[48px]">
                            294, JALAN THEAN TEIK,AYER ITAM,<br />
                            <a href="#timur-laut" className="text-[#427eec]">TIMUR LAUT</a> , <a href="#pulau-pinang" className="text-[#427eec]">PULAU PINANG</a>
                        </address>
                        <a href="#waze" className="mt-8 flex items-center gap-4 text-[28px] leading-[48px] text-[#427eec]">
                            Direction: <WazeIcon />
                        </a>
                    </div>
                    <StoreMap />
                </section>

                <section aria-busy="true" className="mt-4 min-h-screen rounded-3xl border-2 border-slate-200 bg-white p-12 shadow-md">
                    <div className="h-16 w-3/4 rounded-xl bg-[#e5e6e8]" />
                    <div className="mb-16 mt-3 h-12 w-2/3 rounded-xl bg-[#e5e6e8]" />
                    <SkeletonRow />
                    <SkeletonRow />
                </section>
            </main>

            <button type="button" className="fixed bottom-0 right-[50px] h-[68px] w-[198px] rounded-t-xl bg-[#b700b5] font-[Roboto,sans-serif] text-[32px] font-bold text-white shadow-[0_0_8px_rgba(0,0,0,0.5)]">
                Feedback
            </button>
        </div>
    );
}
